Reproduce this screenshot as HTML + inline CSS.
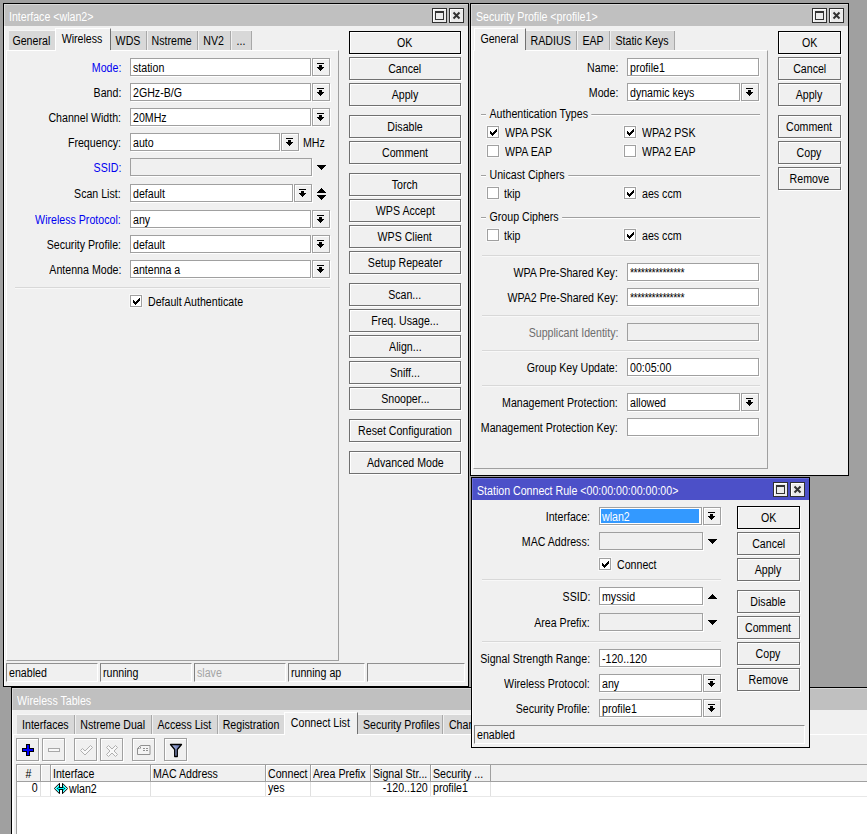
<!DOCTYPE html><html><head><meta charset="utf-8"><title>WinBox</title><style>
html,body{margin:0;padding:0}
body{width:867px;height:838px;overflow:hidden;background:#a0a0a0;position:relative;font:12px "Liberation Sans",sans-serif;color:#000}
body div,body svg.ab{position:absolute;box-sizing:border-box;white-space:pre}
.win{background:#f0f0f0;border:1px solid #000;box-shadow:inset 1px 1px 0 #fff}
.title{height:22px;background:#c0c0c0;color:#fff;line-height:21px;box-shadow:inset 1px 1px 0 #d8d8d8}
.title span{position:absolute;left:5px;top:3px}
.title.act{background:#4c50c8;box-shadow:inset 1px 1px 0 #6a6ed8}
.tb{width:15px;height:15px;border:1px solid #303030;background:#ebebeb;box-shadow:inset 1px 1px 0 #fff}
.tb svg{display:block}
.t{overflow:visible}
.x{display:inline-block;transform:scaleX(.885);white-space:pre}
.xl{transform-origin:0 50%}
.pw{letter-spacing:-0.6px}
.xc{transform-origin:50% 50%}
.xr{transform-origin:100% 50%}
.r{text-align:right}
.blue{color:#0000f0}
.gray{color:#6d6d6d}
.lgray{color:#a4a4a4}
.in{background:#fff;border:1px solid #a0a0a0;padding-left:2px;box-shadow:1px 1px 0 #fff;overflow:hidden}
.in.dis{background:#f0f0f0}
.sel{position:absolute;left:1px;top:1px;bottom:1px;background:#3399ff;color:#fff;display:block;padding-left:1px;line-height:16px}
.dd{width:18px;height:18px;border:1px solid #a0a0a0;background:#f0f0f0;box-shadow:inset 1px 1px 0 #fff,1px 1px 0 #fff}
.dd svg{display:block}
.btn{border:1px solid #707070;background:#f0f0f0;text-align:center;box-shadow:inset 1px 1px 0 #fff,1px 1px 0 #fff}
.btn.def{border-color:#000}
.cb{width:12px;height:12px;border:1px solid #a0a0a0;background:#fff;box-shadow:0 0 0 1px #f8f8f8}
.cb svg{display:block}
.sep{height:1px;background:#d8d8d8;box-shadow:0 1px 0 #f8f8f8}
.gl{background:#f0f0f0;padding:0 4px;transform:scaleX(.885);transform-origin:0 50%}
.gsep{height:1px;background:#a0a0a0;box-shadow:0 1px 0 #fff}
.tab{background:#d8d8d8;text-align:center;padding-right:1px;border-right:1px solid #a8a8a8;box-shadow:0 -1px 0 #f6f6f6}
.tab.nb{border-right:0}
.tab.on{background:#f0f0f0;box-shadow:none;border-left:1px solid #fff;border-top:1px solid #fff;border-right:1px solid #707070;z-index:2}
.tab.on::after{content:'';position:absolute;left:0;right:-1px;bottom:0;height:1px;background:#f0f0f0}
.panel{border-top:1px solid #fff;border-left:1px solid #fff;border-right:1px solid #a0a0a0;border-bottom:1px solid #a0a0a0}
.st{border:1px solid;border-color:#909090 #fff #fff #808080;padding-left:2px;overflow:hidden}
.tbtn{width:23px;height:23px;border:1px solid #a0a0a0;background:#f0f0f0;box-shadow:inset 1px 1px 0 #fff,1px 1px 0 #fff}
.tbtn svg{display:block}
.th{background:#f0f0f0;border-right:1px solid #a0a0a0;height:16px;line-height:18px;padding-left:2px;overflow:hidden;box-shadow:inset 1px 1px 0 #fff}
.td{height:15px;line-height:13px;padding-left:2px;border-right:1px solid #e0e0e0;overflow:hidden}
</style></head><body>
<div class="win" style="left:11px;top:687px;width:900px;height:200px"></div>
<div class="title" style="left:12px;top:688px;width:898px"><span class="x xl">Wireless Tables</span></div>
<div class="panel" style="left:13px;top:734px;width:887px;height:166px"></div>
<div class="tab" style="left:17px;top:715px;width:58px;height:19px;line-height:21px"><span class="x xc">Interfaces</span></div>
<div class="tab" style="left:76px;top:715px;width:76px;height:19px;line-height:21px"><span class="x xc">Nstreme Dual</span></div>
<div class="tab" style="left:153px;top:715px;width:65px;height:19px;line-height:21px"><span class="x xc">Access List</span></div>
<div class="tab nb" style="left:219px;top:715px;width:65px;height:19px;line-height:21px"><span class="x xc">Registration</span></div>
<div class="tab on" style="left:284px;top:712px;width:74px;height:23px;line-height:21px"><span class="x xc">Connect List</span></div>
<div class="tab" style="left:358px;top:715px;width:85px;height:19px;line-height:21px"><span class="x xc">Security Profiles</span></div>
<div class="tab" style="left:444px;top:715px;width:56px;height:19px;line-height:21px"><span class="x xc">Channels</span></div>
<div class="tbtn" style="left:16px;top:738px"><svg width="21" height="21" viewBox="0 0 21 21" shape-rendering="crispEdges"><path fill="#000" d="M9 5h4v4h4v4h-4v4h-4v-4h-4v-4h4z"/><path fill="#0000ff" d="M10 6h2v4h4v2h-4v4h-2v-4h-4v-2h4z"/></svg></div>
<div class="tbtn" style="left:42px;top:738px"><svg width="21" height="21" viewBox="0 0 21 21" shape-rendering="crispEdges"><path fill="#a8a8a8" d="M5 9h12v4h-12z"/><path fill="#f8f8f8" d="M6 10h10v2h-10z"/></svg></div>
<div class="tbtn" style="left:74px;top:738px"><svg width="21" height="21" viewBox="0 0 21 21"><path fill="#f8f8f8" stroke="#b0b0b0" stroke-width="1" d="M5.5 11.5l2-2 2.5 2.5 5.5-5.5 2 2-7.5 7.5z"/></svg></div>
<div class="tbtn" style="left:100px;top:738px"><svg width="21" height="21" viewBox="0 0 21 21"><path fill="#f8f8f8" stroke="#b0b0b0" stroke-width="1" d="M5.5 8.5l2-2 3.500 3.500 3.500-3.500 2 2-3.500 3.500 3.500 3.500-2 2-3.500-3.500-3.500 3.500-2-2 3.500-3.500z"/></svg></div>
<div class="tbtn" style="left:132px;top:738px"><svg width="21" height="21" viewBox="0 0 21 21"><path fill="#f4f4f4" stroke="#909090" stroke-width="1" d="M4.500 9.500l3-3h9.500v9h-12.500z"/><path stroke="#909090" fill="none" d="M4.500 9.500h3v-3M10 9.500h2M13 9.500h2M10 11.500h5" stroke-dasharray="2 1"/></svg></div>
<div class="tbtn" style="left:164px;top:738px"><svg width="21" height="21" viewBox="0 0 21 21"><defs><linearGradient id="fg" x1="0" x2="1" y1="0" y2="0"><stop offset="0" stop-color="#b8c4e8"/><stop offset="1" stop-color="#5060a0"/></linearGradient></defs><path fill="url(#fg)" stroke="#000" stroke-width="1.3" stroke-linejoin="round" d="M5.500 5.500h11l-4.200 5v7h-2.600v-7z"/></svg></div>
<div class="" style="left:16px;top:764px;width:900px;height:80px;background:#fff;border-left:1px solid #a0a0a0;border-top:1px solid #a0a0a0"></div>
<div class="" style="left:17px;top:765px;width:900px;height:17px;background:#f0f0f0;border-bottom:1px solid #a0a0a0"></div>
<div class="th" style="left:17px;top:765px;width:24px;text-align:center;padding-left:0;"><span class="x xc">#</span></div>
<div class="th" style="left:41px;top:765px;width:10px;"><span class="x xl"></span></div>
<div class="th" style="left:51px;top:765px;width:100px;"><span class="x xl">Interface</span></div>
<div class="th" style="left:151px;top:765px;width:115px;"><span class="x xl">MAC Address</span></div>
<div class="th" style="left:266px;top:765px;width:45px;"><span class="x xl">Connect</span></div>
<div class="th" style="left:311px;top:765px;width:60px;"><span class="x xl">Area Prefix</span></div>
<div class="th" style="left:371px;top:765px;width:60px;"><span class="x xl">Signal Str...</span></div>
<div class="th" style="left:431px;top:765px;width:60px;"><span class="x xl">Security ...</span></div>
<div class="td" style="left:17px;top:782px;width:24px;text-align:right;padding-right:2px;"><span class="x xr">0</span></div>
<div class="td" style="left:41px;top:782px;width:10px;"><span class="x xl"></span></div>
<div class="td" style="left:51px;top:782px;width:100px;"><span class="x xl"></span></div>
<div class="td" style="left:151px;top:782px;width:115px;"><span class="x xl"></span></div>
<div class="td" style="left:266px;top:782px;width:45px;"><span class="x xl">yes</span></div>
<div class="td" style="left:311px;top:782px;width:60px;"><span class="x xl"></span></div>
<div class="td" style="left:371px;top:782px;width:60px;text-align:right;padding-right:2px;"><span class="x xr">-120..120</span></div>
<div class="td" style="left:431px;top:782px;width:60px;"><span class="x xl">profile1</span></div>
<div class="" style="left:17px;top:796px;width:900px;height:1px;background:#e8e8e8"></div>
<svg class="ab" style="left:54px;top:783px" width="14" height="11" viewBox="0 0 14 11"><path fill="#c8ffff" stroke="#000" stroke-width="1" d="M5.500 0.300v10.400l-5.200-5.200zM8.500 0.300v10.400l5.200-5.200z"/><path fill="#00ffff" d="M5 2v7l-3.500-3.500zM9 2v7l3.500-3.500zM5 5h4v1h-4z"/><path stroke="#000" stroke-width="1" fill="none" d="M5.500 4.500h3M5.500 6.500h3M4.500 4.500l-1 1 1 1M9.500 4.500l1 1-1 1"/></svg>
<div class="t " style="left:69px;top:782px;width:300px;height:15px;line-height:15px"><span class="x xl">wlan2</span></div>
<div class="win" style="left:3px;top:3px;width:466px;height:684px"></div>
<div class="title" style="left:4px;top:4px;width:464px"><span class="x xl">Interface &lt;wlan2&gt;</span></div>
<div class="tb" style="left:432px;top:8px"><svg width="13" height="13" viewBox="0 0 13 13" shape-rendering="crispEdges"><path fill="#333" d="M2 2h9v2h-9zM2 4h1v7h-1zM10 4h1v7h-1zM2 10h9v1h-9z"/></svg></div>
<div class="tb" style="left:449px;top:8px"><svg width="13" height="13" viewBox="0 0 13 13"><path stroke="#333" stroke-width="2" fill="none" d="M3.5 3.5l6 6M9.5 3.5l-6 6"/></svg></div>
<div class="panel" style="left:6px;top:50px;width:333px;height:611px"></div>
<div class="tab nb" style="left:9px;top:31px;width:46px;height:19px;line-height:21px"><span class="x xc">General</span></div>
<div class="tab on" style="left:55px;top:28px;width:56px;height:23px;line-height:21px"><span class="x xc">Wireless</span></div>
<div class="tab" style="left:111px;top:31px;width:36px;height:19px;line-height:21px"><span class="x xc">WDS</span></div>
<div class="tab" style="left:148px;top:31px;width:50px;height:19px;line-height:21px"><span class="x xc">Nstreme</span></div>
<div class="tab" style="left:199px;top:31px;width:32px;height:19px;line-height:21px"><span class="x xc">NV2</span></div>
<div class="tab" style="left:232px;top:31px;width:20px;height:19px;line-height:21px"><span class="x xc">...</span></div>
<div class="t r blue" style="left:-79px;top:59px;width:200px;height:18px;line-height:18px"><span class="x xr">Mode:</span></div>
<div class="in" style="left:130px;top:58px;width:181px;height:18px;line-height:18px"><span class="x xl">station</span></div>
<div class="dd" style="left:312px;top:58px"><svg width="16" height="16" viewBox="0 0 16 16" shape-rendering="crispEdges"><path d="M4 4h7v1h-7zM6 6h3v2h-3zM4 8h7v1h-7zM5 9h5v1h-5zM6 10h3v1h-3zM7 11h1v1h-1z"/></svg></div>
<div class="t r " style="left:-79px;top:84px;width:200px;height:18px;line-height:18px"><span class="x xr">Band:</span></div>
<div class="in" style="left:130px;top:83px;width:181px;height:18px;line-height:18px"><span class="x xl">2GHz-B/G</span></div>
<div class="dd" style="left:312px;top:83px"><svg width="16" height="16" viewBox="0 0 16 16" shape-rendering="crispEdges"><path d="M4 4h7v1h-7zM6 6h3v2h-3zM4 8h7v1h-7zM5 9h5v1h-5zM6 10h3v1h-3zM7 11h1v1h-1z"/></svg></div>
<div class="t r " style="left:-79px;top:109px;width:200px;height:18px;line-height:18px"><span class="x xr">Channel Width:</span></div>
<div class="in" style="left:130px;top:108px;width:181px;height:18px;line-height:18px"><span class="x xl">20MHz</span></div>
<div class="dd" style="left:312px;top:108px"><svg width="16" height="16" viewBox="0 0 16 16" shape-rendering="crispEdges"><path d="M4 4h7v1h-7zM6 6h3v2h-3zM4 8h7v1h-7zM5 9h5v1h-5zM6 10h3v1h-3zM7 11h1v1h-1z"/></svg></div>
<div class="t r " style="left:-79px;top:134px;width:200px;height:18px;line-height:18px"><span class="x xr">Frequency:</span></div>
<div class="in" style="left:130px;top:133px;width:150px;height:18px;line-height:18px"><span class="x xl">auto</span></div>
<div class="dd" style="left:281px;top:133px"><svg width="16" height="16" viewBox="0 0 16 16" shape-rendering="crispEdges"><path d="M4 4h7v1h-7zM6 6h3v2h-3zM4 8h7v1h-7zM5 9h5v1h-5zM6 10h3v1h-3zM7 11h1v1h-1z"/></svg></div>
<div class="t " style="left:303px;top:134px;width:300px;height:18px;line-height:18px"><span class="x xl">MHz</span></div>
<div class="t r blue" style="left:-79px;top:159px;width:200px;height:18px;line-height:18px"><span class="x xr">SSID:</span></div>
<div class="in dis" style="left:130px;top:158px;width:182px;height:18px;line-height:18px"><span class="x xl"></span></div>
<svg class="ab" style="left:317px;top:165px" width="9" height="5" viewBox="0 0 9 5" shape-rendering="crispEdges"><path d="M0 0h9v1h-9zM1 1h7v1h-7zM2 2h5v1h-5zM3 3h3v1h-3zM4 4h1v1h-1z"/></svg>
<div class="t r " style="left:-79px;top:185px;width:200px;height:18px;line-height:18px"><span class="x xr">Scan List:</span></div>
<div class="in" style="left:130px;top:184px;width:163px;height:18px;line-height:18px"><span class="x xl">default</span></div>
<div class="dd" style="left:294px;top:184px"><svg width="16" height="16" viewBox="0 0 16 16" shape-rendering="crispEdges"><path d="M4 4h7v1h-7zM6 6h3v2h-3zM4 8h7v1h-7zM5 9h5v1h-5zM6 10h3v1h-3zM7 11h1v1h-1z"/></svg></div>
<svg class="ab" style="left:317px;top:188px" width="9" height="5" viewBox="0 0 9 5" shape-rendering="crispEdges"><path d="M4 0h1v1h-1zM3 1h3v1h-3zM2 2h5v1h-5zM1 3h7v1h-7zM0 4h9v1h-9z"/></svg>
<svg class="ab" style="left:317px;top:195px" width="9" height="5" viewBox="0 0 9 5" shape-rendering="crispEdges"><path d="M0 0h9v1h-9zM1 1h7v1h-7zM2 2h5v1h-5zM3 3h3v1h-3zM4 4h1v1h-1z"/></svg>
<div class="t r blue" style="left:-79px;top:211px;width:200px;height:18px;line-height:18px"><span class="x xr">Wireless Protocol:</span></div>
<div class="in" style="left:130px;top:210px;width:181px;height:18px;line-height:18px"><span class="x xl">any</span></div>
<div class="dd" style="left:312px;top:210px"><svg width="16" height="16" viewBox="0 0 16 16" shape-rendering="crispEdges"><path d="M4 4h7v1h-7zM6 6h3v2h-3zM4 8h7v1h-7zM5 9h5v1h-5zM6 10h3v1h-3zM7 11h1v1h-1z"/></svg></div>
<div class="t r " style="left:-79px;top:236px;width:200px;height:18px;line-height:18px"><span class="x xr">Security Profile:</span></div>
<div class="in" style="left:130px;top:235px;width:181px;height:18px;line-height:18px"><span class="x xl">default</span></div>
<div class="dd" style="left:312px;top:235px"><svg width="16" height="16" viewBox="0 0 16 16" shape-rendering="crispEdges"><path d="M4 4h7v1h-7zM6 6h3v2h-3zM4 8h7v1h-7zM5 9h5v1h-5zM6 10h3v1h-3zM7 11h1v1h-1z"/></svg></div>
<div class="t r " style="left:-79px;top:261px;width:200px;height:18px;line-height:18px"><span class="x xr">Antenna Mode:</span></div>
<div class="in" style="left:130px;top:260px;width:181px;height:18px;line-height:18px"><span class="x xl">antenna a</span></div>
<div class="dd" style="left:312px;top:260px"><svg width="16" height="16" viewBox="0 0 16 16" shape-rendering="crispEdges"><path d="M4 4h7v1h-7zM6 6h3v2h-3zM4 8h7v1h-7zM5 9h5v1h-5zM6 10h3v1h-3zM7 11h1v1h-1z"/></svg></div>
<div class="sep" style="left:15px;top:287px;width:315px"></div>
<div class="cb" style="left:130px;top:295px"><svg width="10" height="10" viewBox="0 0 10 10" shape-rendering="crispEdges"><path d="M2 4h1v3h-1zM3 5h1v3h-1zM4 6h1v3h-1zM5 5h1v3h-1zM6 4h1v3h-1zM7 3h1v3h-1zM8 2h1v3h-1z"/></svg></div>
<div class="t " style="left:148px;top:293px;width:300px;height:18px;line-height:18px"><span class="x xl">Default Authenticate</span></div>
<div class="btn def" style="left:349px;top:31px;width:112px;height:23px;line-height:23px"><span class="x xc">OK</span></div>
<div class="btn" style="left:349px;top:57px;width:112px;height:23px;line-height:23px"><span class="x xc">Cancel</span></div>
<div class="btn" style="left:349px;top:83px;width:112px;height:23px;line-height:23px"><span class="x xc">Apply</span></div>
<div class="btn" style="left:349px;top:115px;width:112px;height:23px;line-height:23px"><span class="x xc">Disable</span></div>
<div class="btn" style="left:349px;top:141px;width:112px;height:23px;line-height:23px"><span class="x xc">Comment</span></div>
<div class="btn" style="left:349px;top:173px;width:112px;height:23px;line-height:23px"><span class="x xc">Torch</span></div>
<div class="btn" style="left:349px;top:199px;width:112px;height:23px;line-height:23px"><span class="x xc">WPS Accept</span></div>
<div class="btn" style="left:349px;top:225px;width:112px;height:23px;line-height:23px"><span class="x xc">WPS Client</span></div>
<div class="btn" style="left:349px;top:251px;width:112px;height:23px;line-height:23px"><span class="x xc">Setup Repeater</span></div>
<div class="btn" style="left:349px;top:283px;width:112px;height:23px;line-height:23px"><span class="x xc">Scan...</span></div>
<div class="btn" style="left:349px;top:309px;width:112px;height:23px;line-height:23px"><span class="x xc">Freq. Usage...</span></div>
<div class="btn" style="left:349px;top:335px;width:112px;height:23px;line-height:23px"><span class="x xc">Align...</span></div>
<div class="btn" style="left:349px;top:361px;width:112px;height:23px;line-height:23px"><span class="x xc">Sniff...</span></div>
<div class="btn" style="left:349px;top:387px;width:112px;height:23px;line-height:23px"><span class="x xc">Snooper...</span></div>
<div class="btn" style="left:349px;top:419px;width:112px;height:23px;line-height:23px"><span class="x xc">Reset Configuration</span></div>
<div class="btn" style="left:349px;top:451px;width:112px;height:23px;line-height:23px"><span class="x xc">Advanced Mode</span></div>
<div class="st " style="left:6px;top:663px;width:92px;height:19px;line-height:19px"><span class="x xl">enabled</span></div>
<div class="st " style="left:100px;top:663px;width:92px;height:19px;line-height:19px"><span class="x xl">running</span></div>
<div class="st lgray" style="left:194px;top:663px;width:92px;height:19px;line-height:19px"><span class="x xl">slave</span></div>
<div class="st " style="left:288px;top:663px;width:77px;height:19px;line-height:19px"><span class="x xl">running ap</span></div>
<div class="st " style="left:367px;top:663px;width:98px;height:19px;line-height:19px"><span class="x xl"></span></div>
<div class="win" style="left:470px;top:3px;width:379px;height:473px"></div>
<div class="title" style="left:471px;top:4px;width:377px"><span class="x xl">Security Profile &lt;profile1&gt;</span></div>
<div class="tb" style="left:812px;top:8px"><svg width="13" height="13" viewBox="0 0 13 13" shape-rendering="crispEdges"><path fill="#333" d="M2 2h9v2h-9zM2 4h1v7h-1zM10 4h1v7h-1zM2 10h9v1h-9z"/></svg></div>
<div class="tb" style="left:829px;top:8px"><svg width="13" height="13" viewBox="0 0 13 13"><path stroke="#333" stroke-width="2" fill="none" d="M3.5 3.5l6 6M9.5 3.5l-6 6"/></svg></div>
<div class="panel" style="left:473px;top:50px;width:295px;height:419px"></div>
<div class="tab on" style="left:474px;top:28px;width:52px;height:23px;line-height:21px"><span class="x xc">General</span></div>
<div class="tab" style="left:526px;top:31px;width:51px;height:19px;line-height:21px"><span class="x xc">RADIUS</span></div>
<div class="tab" style="left:578px;top:31px;width:32px;height:19px;line-height:21px"><span class="x xc">EAP</span></div>
<div class="tab" style="left:611px;top:31px;width:64px;height:19px;line-height:21px"><span class="x xc">Static Keys</span></div>
<div class="t r " style="left:418px;top:59px;width:200px;height:18px;line-height:18px"><span class="x xr">Name:</span></div>
<div class="in" style="left:627px;top:58px;width:132px;height:18px;line-height:18px"><span class="x xl">profile1</span></div>
<div class="t r " style="left:418px;top:84px;width:200px;height:18px;line-height:18px"><span class="x xr">Mode:</span></div>
<div class="in" style="left:627px;top:83px;width:113px;height:18px;line-height:18px"><span class="x xl">dynamic keys</span></div>
<div class="dd" style="left:741px;top:83px"><svg width="16" height="16" viewBox="0 0 16 16" shape-rendering="crispEdges"><path d="M4 4h7v1h-7zM6 6h3v2h-3zM4 8h7v1h-7zM5 9h5v1h-5zM6 10h3v1h-3zM7 11h1v1h-1z"/></svg></div>
<div class="gsep" style="left:481px;top:114px;width:279px"></div>
<div class="t gl" style="left:486px;top:105px;height:18px;line-height:18px">Authentication Types</div>
<div class="cb" style="left:487px;top:126px"><svg width="10" height="10" viewBox="0 0 10 10" shape-rendering="crispEdges"><path d="M2 4h1v3h-1zM3 5h1v3h-1zM4 6h1v3h-1zM5 5h1v3h-1zM6 4h1v3h-1zM7 3h1v3h-1zM8 2h1v3h-1z"/></svg></div>
<div class="t " style="left:505px;top:124px;width:300px;height:18px;line-height:18px"><span class="x xl">WPA PSK</span></div>
<div class="cb" style="left:624px;top:126px"><svg width="10" height="10" viewBox="0 0 10 10" shape-rendering="crispEdges"><path d="M2 4h1v3h-1zM3 5h1v3h-1zM4 6h1v3h-1zM5 5h1v3h-1zM6 4h1v3h-1zM7 3h1v3h-1zM8 2h1v3h-1z"/></svg></div>
<div class="t " style="left:642px;top:124px;width:300px;height:18px;line-height:18px"><span class="x xl">WPA2 PSK</span></div>
<div class="cb" style="left:487px;top:145px"></div>
<div class="t " style="left:505px;top:143px;width:300px;height:18px;line-height:18px"><span class="x xl">WPA EAP</span></div>
<div class="cb" style="left:624px;top:145px"></div>
<div class="t " style="left:642px;top:143px;width:300px;height:18px;line-height:18px"><span class="x xl">WPA2 EAP</span></div>
<div class="gsep" style="left:481px;top:175px;width:279px"></div>
<div class="t gl" style="left:486px;top:166px;height:18px;line-height:18px">Unicast Ciphers</div>
<div class="cb" style="left:487px;top:187px"></div>
<div class="t " style="left:504px;top:185px;width:300px;height:18px;line-height:18px"><span class="x xl">tkip</span></div>
<div class="cb" style="left:624px;top:187px"><svg width="10" height="10" viewBox="0 0 10 10" shape-rendering="crispEdges"><path d="M2 4h1v3h-1zM3 5h1v3h-1zM4 6h1v3h-1zM5 5h1v3h-1zM6 4h1v3h-1zM7 3h1v3h-1zM8 2h1v3h-1z"/></svg></div>
<div class="t " style="left:642px;top:185px;width:300px;height:18px;line-height:18px"><span class="x xl">aes ccm</span></div>
<div class="gsep" style="left:481px;top:217px;width:279px"></div>
<div class="t gl" style="left:486px;top:208px;height:18px;line-height:18px">Group Ciphers</div>
<div class="cb" style="left:487px;top:229px"></div>
<div class="t " style="left:504px;top:227px;width:300px;height:18px;line-height:18px"><span class="x xl">tkip</span></div>
<div class="cb" style="left:624px;top:229px"><svg width="10" height="10" viewBox="0 0 10 10" shape-rendering="crispEdges"><path d="M2 4h1v3h-1zM3 5h1v3h-1zM4 6h1v3h-1zM5 5h1v3h-1zM6 4h1v3h-1zM7 3h1v3h-1zM8 2h1v3h-1z"/></svg></div>
<div class="t " style="left:642px;top:227px;width:300px;height:18px;line-height:18px"><span class="x xl">aes ccm</span></div>
<div class="sep" style="left:482px;top:255px;width:278px"></div>
<div class="t r " style="left:418px;top:264px;width:200px;height:18px;line-height:18px"><span class="x xr">WPA Pre-Shared Key:</span></div>
<div class="in" style="left:627px;top:263px;width:132px;height:18px;line-height:18px"><span class="x xl pw">***************</span></div>
<div class="t r " style="left:418px;top:289px;width:200px;height:18px;line-height:18px"><span class="x xr">WPA2 Pre-Shared Key:</span></div>
<div class="in" style="left:627px;top:288px;width:132px;height:18px;line-height:18px"><span class="x xl pw">***************</span></div>
<div class="sep" style="left:482px;top:315px;width:278px"></div>
<div class="t r gray" style="left:418px;top:324px;width:200px;height:18px;line-height:18px"><span class="x xr">Supplicant Identity:</span></div>
<div class="in dis" style="left:627px;top:323px;width:132px;height:18px;line-height:18px"><span class="x xl"></span></div>
<div class="sep" style="left:482px;top:350px;width:278px"></div>
<div class="t r " style="left:418px;top:359px;width:200px;height:18px;line-height:18px"><span class="x xr">Group Key Update:</span></div>
<div class="in" style="left:627px;top:358px;width:132px;height:18px;line-height:18px"><span class="x xl">00:05:00</span></div>
<div class="sep" style="left:482px;top:385px;width:278px"></div>
<div class="t r " style="left:418px;top:394px;width:200px;height:18px;line-height:18px"><span class="x xr">Management Protection:</span></div>
<div class="in" style="left:627px;top:393px;width:113px;height:18px;line-height:18px"><span class="x xl">allowed</span></div>
<div class="dd" style="left:741px;top:393px"><svg width="16" height="16" viewBox="0 0 16 16" shape-rendering="crispEdges"><path d="M4 4h7v1h-7zM6 6h3v2h-3zM4 8h7v1h-7zM5 9h5v1h-5zM6 10h3v1h-3zM7 11h1v1h-1z"/></svg></div>
<div class="t r " style="left:418px;top:419px;width:200px;height:18px;line-height:18px"><span class="x xr">Management Protection Key:</span></div>
<div class="in" style="left:627px;top:418px;width:132px;height:18px;line-height:18px"><span class="x xl"></span></div>
<div class="btn def" style="left:778px;top:31px;width:63px;height:23px;line-height:23px"><span class="x xc">OK</span></div>
<div class="btn" style="left:778px;top:57px;width:63px;height:23px;line-height:23px"><span class="x xc">Cancel</span></div>
<div class="btn" style="left:778px;top:83px;width:63px;height:23px;line-height:23px"><span class="x xc">Apply</span></div>
<div class="btn" style="left:778px;top:115px;width:63px;height:23px;line-height:23px"><span class="x xc">Comment</span></div>
<div class="btn" style="left:778px;top:141px;width:63px;height:23px;line-height:23px"><span class="x xc">Copy</span></div>
<div class="btn" style="left:778px;top:167px;width:63px;height:23px;line-height:23px"><span class="x xc">Remove</span></div>
<div class="win" style="left:471px;top:477px;width:339px;height:271px"></div>
<div class="title act" style="left:472px;top:478px;width:337px"><span class="x xl">Station Connect Rule &lt;00:00:00:00:00:00&gt;</span></div>
<div class="tb" style="left:773px;top:482px"><svg width="13" height="13" viewBox="0 0 13 13" shape-rendering="crispEdges"><path fill="#333" d="M2 2h9v2h-9zM2 4h1v7h-1zM10 4h1v7h-1zM2 10h9v1h-9z"/></svg></div>
<div class="tb" style="left:790px;top:482px"><svg width="13" height="13" viewBox="0 0 13 13"><path stroke="#333" stroke-width="2" fill="none" d="M3.5 3.5l6 6M9.5 3.5l-6 6"/></svg></div>
<div class="t r " style="left:390px;top:508px;width:200px;height:18px;line-height:18px"><span class="x xr">Interface:</span></div>
<div class="in" style="left:599px;top:507px;width:103px;height:18px;line-height:18px"><span class="sel" style="width:97px"><span class="x xl">wlan2</span></span></div>
<div class="dd" style="left:703px;top:507px"><svg width="16" height="16" viewBox="0 0 16 16" shape-rendering="crispEdges"><path d="M4 4h7v1h-7zM6 6h3v2h-3zM4 8h7v1h-7zM5 9h5v1h-5zM6 10h3v1h-3zM7 11h1v1h-1z"/></svg></div>
<div class="t r " style="left:390px;top:533px;width:200px;height:18px;line-height:18px"><span class="x xr">MAC Address:</span></div>
<div class="in dis" style="left:599px;top:532px;width:104px;height:18px;line-height:18px"><span class="x xl"></span></div>
<svg class="ab" style="left:708px;top:539px" width="9" height="5" viewBox="0 0 9 5" shape-rendering="crispEdges"><path d="M0 0h9v1h-9zM1 1h7v1h-7zM2 2h5v1h-5zM3 3h3v1h-3zM4 4h1v1h-1z"/></svg>
<div class="cb" style="left:599px;top:558px"><svg width="10" height="10" viewBox="0 0 10 10" shape-rendering="crispEdges"><path d="M2 4h1v3h-1zM3 5h1v3h-1zM4 6h1v3h-1zM5 5h1v3h-1zM6 4h1v3h-1zM7 3h1v3h-1zM8 2h1v3h-1z"/></svg></div>
<div class="t " style="left:617px;top:556px;width:300px;height:18px;line-height:18px"><span class="x xl">Connect</span></div>
<div class="sep" style="left:482px;top:579px;width:239px"></div>
<div class="t r " style="left:390px;top:588px;width:200px;height:18px;line-height:18px"><span class="x xr">SSID:</span></div>
<div class="in" style="left:599px;top:587px;width:104px;height:18px;line-height:18px"><span class="x xl">myssid</span></div>
<svg class="ab" style="left:708px;top:594px" width="9" height="5" viewBox="0 0 9 5" shape-rendering="crispEdges"><path d="M4 0h1v1h-1zM3 1h3v1h-3zM2 2h5v1h-5zM1 3h7v1h-7zM0 4h9v1h-9z"/></svg>
<div class="t r " style="left:390px;top:614px;width:200px;height:18px;line-height:18px"><span class="x xr">Area Prefix:</span></div>
<div class="in dis" style="left:599px;top:613px;width:104px;height:18px;line-height:18px"><span class="x xl"></span></div>
<svg class="ab" style="left:708px;top:620px" width="9" height="5" viewBox="0 0 9 5" shape-rendering="crispEdges"><path d="M0 0h9v1h-9zM1 1h7v1h-7zM2 2h5v1h-5zM3 3h3v1h-3zM4 4h1v1h-1z"/></svg>
<div class="sep" style="left:482px;top:641px;width:239px"></div>
<div class="t r " style="left:390px;top:650px;width:200px;height:18px;line-height:18px"><span class="x xr">Signal Strength Range:</span></div>
<div class="in" style="left:599px;top:649px;width:122px;height:18px;line-height:18px"><span class="x xl">-120..120</span></div>
<div class="t r " style="left:390px;top:675px;width:200px;height:18px;line-height:18px"><span class="x xr">Wireless Protocol:</span></div>
<div class="in" style="left:599px;top:674px;width:103px;height:18px;line-height:18px"><span class="x xl">any</span></div>
<div class="dd" style="left:703px;top:674px"><svg width="16" height="16" viewBox="0 0 16 16" shape-rendering="crispEdges"><path d="M4 4h7v1h-7zM6 6h3v2h-3zM4 8h7v1h-7zM5 9h5v1h-5zM6 10h3v1h-3zM7 11h1v1h-1z"/></svg></div>
<div class="t r " style="left:390px;top:700px;width:200px;height:18px;line-height:18px"><span class="x xr">Security Profile:</span></div>
<div class="in" style="left:599px;top:699px;width:103px;height:18px;line-height:18px"><span class="x xl">profile1</span></div>
<div class="dd" style="left:703px;top:699px"><svg width="16" height="16" viewBox="0 0 16 16" shape-rendering="crispEdges"><path d="M4 4h7v1h-7zM6 6h3v2h-3zM4 8h7v1h-7zM5 9h5v1h-5zM6 10h3v1h-3zM7 11h1v1h-1z"/></svg></div>
<div class="btn def" style="left:737px;top:506px;width:63px;height:23px;line-height:23px"><span class="x xc">OK</span></div>
<div class="btn" style="left:737px;top:532px;width:63px;height:23px;line-height:23px"><span class="x xc">Cancel</span></div>
<div class="btn" style="left:737px;top:558px;width:63px;height:23px;line-height:23px"><span class="x xc">Apply</span></div>
<div class="btn" style="left:737px;top:590px;width:63px;height:23px;line-height:23px"><span class="x xc">Disable</span></div>
<div class="btn" style="left:737px;top:616px;width:63px;height:23px;line-height:23px"><span class="x xc">Comment</span></div>
<div class="btn" style="left:737px;top:642px;width:63px;height:23px;line-height:23px"><span class="x xc">Copy</span></div>
<div class="btn" style="left:737px;top:668px;width:63px;height:23px;line-height:23px"><span class="x xc">Remove</span></div>
<div class="st " style="left:474px;top:725px;width:331px;height:19px;line-height:19px"><span class="x xl">enabled</span></div>
<div class="" style="left:0px;top:834px;width:867px;height:4px;background:#fff;z-index:10"></div>
</body></html>
